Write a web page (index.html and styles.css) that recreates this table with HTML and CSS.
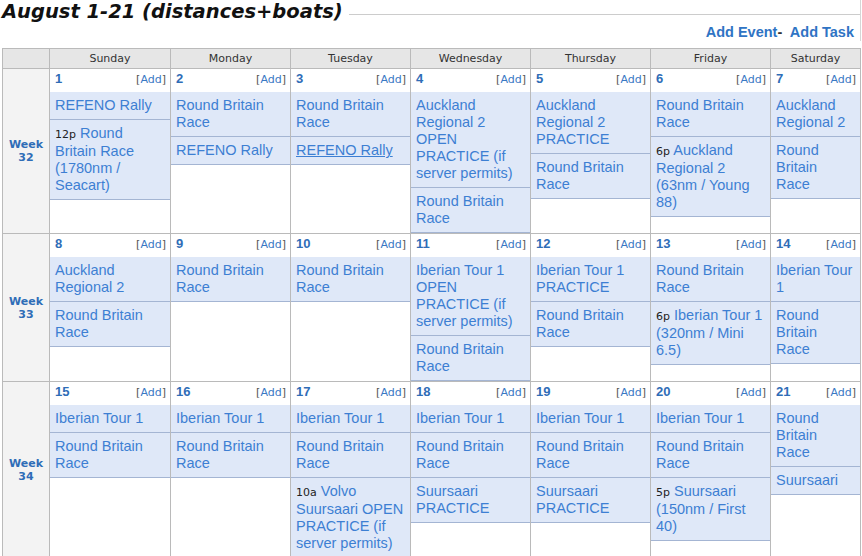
FILE: index.html
```html
<!DOCTYPE html>
<html>
<head>
<meta charset="utf-8">
<title>August 1-21 (distances+boats)</title>
<link rel="stylesheet" href="styles.css">
</head>
<body>
<div class="head">
  <div class="titlebar">
    <h1 class="title">August 1-21 (distances+boats)</h1>
    <span class="rule"></span>
  </div>
  <div class="actions"><a class="act" href="#">Add Event</a>-&nbsp; <a class="act" href="#">Add Task</a></div>
</div>

<div class="cal">
  <div class="hd"></div>
  <div class="hd">Sunday</div>
  <div class="hd">Monday</div>
  <div class="hd">Tuesday</div>
  <div class="hd">Wednesday</div>
  <div class="hd">Thursday</div>
  <div class="hd">Friday</div>
  <div class="hd">Saturday</div>

  <!-- Week 32 -->
  <div class="wk"><a href="#">Week<br>32</a></div>
  <div class="day">
    <div class="dayhead"><span class="num">1</span><span class="add">[<a href="#">Add</a>]</span></div>
    <div class="ev"><a href="#">REFENO Rally</a></div>
    <div class="ev"><span class="time">12p</span> <a href="#">Round Britain Race (1780nm / Seacart)</a></div>
  </div>
  <div class="day">
    <div class="dayhead"><span class="num">2</span><span class="add">[<a href="#">Add</a>]</span></div>
    <div class="ev"><a href="#">Round Britain Race</a></div>
    <div class="ev"><a href="#">REFENO Rally</a></div>
  </div>
  <div class="day">
    <div class="dayhead"><span class="num">3</span><span class="add">[<a href="#">Add</a>]</span></div>
    <div class="ev"><a href="#">Round Britain Race</a></div>
    <div class="ev"><a class="hover" href="#">REFENO Rally</a></div>
  </div>
  <div class="day">
    <div class="dayhead"><span class="num">4</span><span class="add">[<a href="#">Add</a>]</span></div>
    <div class="ev"><a href="#">Auckland Regional 2 OPEN PRACTICE (if server permits)</a></div>
    <div class="ev"><a href="#">Round Britain Race</a></div>
  </div>
  <div class="day">
    <div class="dayhead"><span class="num">5</span><span class="add">[<a href="#">Add</a>]</span></div>
    <div class="ev"><a href="#">Auckland Regional 2 PRACTICE</a></div>
    <div class="ev"><a href="#">Round Britain Race</a></div>
  </div>
  <div class="day">
    <div class="dayhead"><span class="num">6</span><span class="add">[<a href="#">Add</a>]</span></div>
    <div class="ev"><a href="#">Round Britain Race</a></div>
    <div class="ev"><span class="time">6p</span> <a href="#">Auckland Regional 2 (63nm / Young 88)</a></div>
  </div>
  <div class="day sat">
    <div class="dayhead"><span class="num">7</span><span class="add">[<a href="#">Add</a>]</span></div>
    <div class="ev"><a href="#">Auckland Regional 2</a></div>
    <div class="ev"><a href="#">Round Britain Race</a></div>
  </div>

  <!-- Week 33 -->
  <div class="wk"><a href="#">Week<br>33</a></div>
  <div class="day">
    <div class="dayhead"><span class="num">8</span><span class="add">[<a href="#">Add</a>]</span></div>
    <div class="ev"><a href="#">Auckland Regional 2</a></div>
    <div class="ev"><a href="#">Round Britain Race</a></div>
  </div>
  <div class="day">
    <div class="dayhead"><span class="num">9</span><span class="add">[<a href="#">Add</a>]</span></div>
    <div class="ev"><a href="#">Round Britain Race</a></div>
  </div>
  <div class="day">
    <div class="dayhead"><span class="num">10</span><span class="add">[<a href="#">Add</a>]</span></div>
    <div class="ev"><a href="#">Round Britain Race</a></div>
  </div>
  <div class="day">
    <div class="dayhead"><span class="num">11</span><span class="add">[<a href="#">Add</a>]</span></div>
    <div class="ev"><a href="#">Iberian Tour 1 OPEN PRACTICE (if server permits)</a></div>
    <div class="ev"><a href="#">Round Britain Race</a></div>
  </div>
  <div class="day">
    <div class="dayhead"><span class="num">12</span><span class="add">[<a href="#">Add</a>]</span></div>
    <div class="ev"><a href="#">Iberian Tour 1 PRACTICE</a></div>
    <div class="ev"><a href="#">Round Britain Race</a></div>
  </div>
  <div class="day">
    <div class="dayhead"><span class="num">13</span><span class="add">[<a href="#">Add</a>]</span></div>
    <div class="ev"><a href="#">Round Britain Race</a></div>
    <div class="ev"><span class="time">6p</span> <a href="#">Iberian Tour 1 (320nm / Mini 6.5)</a></div>
  </div>
  <div class="day sat">
    <div class="dayhead"><span class="num">14</span><span class="add">[<a href="#">Add</a>]</span></div>
    <div class="ev"><a href="#">Iberian Tour 1</a></div>
    <div class="ev"><a href="#">Round Britain Race</a></div>
  </div>

  <!-- Week 34 -->
  <div class="wk"><a href="#">Week<br>34</a></div>
  <div class="day">
    <div class="dayhead"><span class="num">15</span><span class="add">[<a href="#">Add</a>]</span></div>
    <div class="ev"><a href="#">Iberian Tour 1</a></div>
    <div class="ev"><a href="#">Round Britain Race</a></div>
  </div>
  <div class="day">
    <div class="dayhead"><span class="num">16</span><span class="add">[<a href="#">Add</a>]</span></div>
    <div class="ev"><a href="#">Iberian Tour 1</a></div>
    <div class="ev"><a href="#">Round Britain Race</a></div>
  </div>
  <div class="day">
    <div class="dayhead"><span class="num">17</span><span class="add">[<a href="#">Add</a>]</span></div>
    <div class="ev"><a href="#">Iberian Tour 1</a></div>
    <div class="ev"><a href="#">Round Britain Race</a></div>
    <div class="ev"><span class="time">10a</span> <a href="#">Volvo Suursaari OPEN PRACTICE (if server permits)</a></div>
  </div>
  <div class="day">
    <div class="dayhead"><span class="num">18</span><span class="add">[<a href="#">Add</a>]</span></div>
    <div class="ev"><a href="#">Iberian Tour 1</a></div>
    <div class="ev"><a href="#">Round Britain Race</a></div>
    <div class="ev"><a href="#">Suursaari PRACTICE</a></div>
  </div>
  <div class="day">
    <div class="dayhead"><span class="num">19</span><span class="add">[<a href="#">Add</a>]</span></div>
    <div class="ev"><a href="#">Iberian Tour 1</a></div>
    <div class="ev"><a href="#">Round Britain Race</a></div>
    <div class="ev"><a href="#">Suursaari PRACTICE</a></div>
  </div>
  <div class="day">
    <div class="dayhead"><span class="num">20</span><span class="add">[<a href="#">Add</a>]</span></div>
    <div class="ev"><a href="#">Iberian Tour 1</a></div>
    <div class="ev"><a href="#">Round Britain Race</a></div>
    <div class="ev"><span class="time">5p</span> <a href="#">Suursaari (150nm / First 40)</a></div>
  </div>
  <div class="day sat">
    <div class="dayhead"><span class="num">21</span><span class="add">[<a href="#">Add</a>]</span></div>
    <div class="ev"><a href="#">Round Britain Race</a></div>
    <div class="ev"><a href="#">Suursaari</a></div>
  </div>
</div>
</body>
</html>
```

FILE: styles.css
```css
html, body {
  margin: 0;
  padding: 0;
  background: #ffffff;
}

body {
  font-family: "DejaVu Sans", Verdana, sans-serif;
  color: #222;
}

a {
  text-decoration: none;
  color: inherit;
}

.head {
  width: 860px;
  border-right: 1px solid #d6d6d6;
}

.titlebar {
  display: flex;
  height: 24px;
}

.title {
  margin: 0;
  padding-left: 2px;
  font-family: "DejaVu Sans", Verdana, sans-serif;
  font-size: 19.5px;
  line-height: 24px;
  font-weight: bold;
  font-style: italic;
  color: #111;
  white-space: nowrap;
}

.rule {
  flex: 1;
  height: 1px;
  margin: 14px 0 0 6px;
  background: #cccccc;
}

.actions {
  height: 17px;
  margin-bottom: 7px;
  padding-right: 6px;
  text-align: right;
  font-family: "Liberation Sans", Arial, sans-serif;
  font-size: 14.5px;
  line-height: 17px;
  font-weight: bold;
  color: #333;
}

.act {
  color: #2f74c4;
}

.cal {
  display: grid;
  grid-template-columns: 46px 120px repeat(5, 119px) 89px;
  gap: 1px;
  padding: 1px;
  margin-left: 2px;
  width: max-content;
  background: #bababa;
}

.hd {
  background: #e6e6e6;
  text-align: center;
  font-size: 11px;
  line-height: 19px;
  height: 19px;
  color: #333;
}

.wk {
  background: #f3f3f3;
  display: flex;
  align-items: center;
  justify-content: center;
  text-align: center;
  font-size: 11px;
  line-height: 13px;
  font-weight: bold;
  color: #2f6db7;
}

.day {
  background: #ffffff;
}

.dayhead {
  display: flex;
  justify-content: space-between;
  align-items: baseline;
  height: 23px;
  padding: 0 4px 0 5px;
  line-height: 19px;
}

.num {
  font-family: "Liberation Sans", Arial, sans-serif;
  font-size: 13px;
  font-weight: bold;
  color: #2f6db7;
}

.add {
  font-size: 11px;
  color: #555;
}

.add a {
  color: #3a78c4;
}

.ev {
  background: #dfe8f8;
  border-bottom: 1px solid #a4b5d3;
  padding: 5px 4px 5px 5px;
  font-family: "Liberation Sans", Arial, sans-serif;
  font-size: 14.5px;
  line-height: 17px;
  color: #3d7fd3;
}

.sat .ev {
  padding-right: 6px;
}

.time {
  font-family: "DejaVu Sans", Verdana, sans-serif;
  font-size: 11px;
  color: #222;
}

.hover {
  text-decoration: underline;
}
```
